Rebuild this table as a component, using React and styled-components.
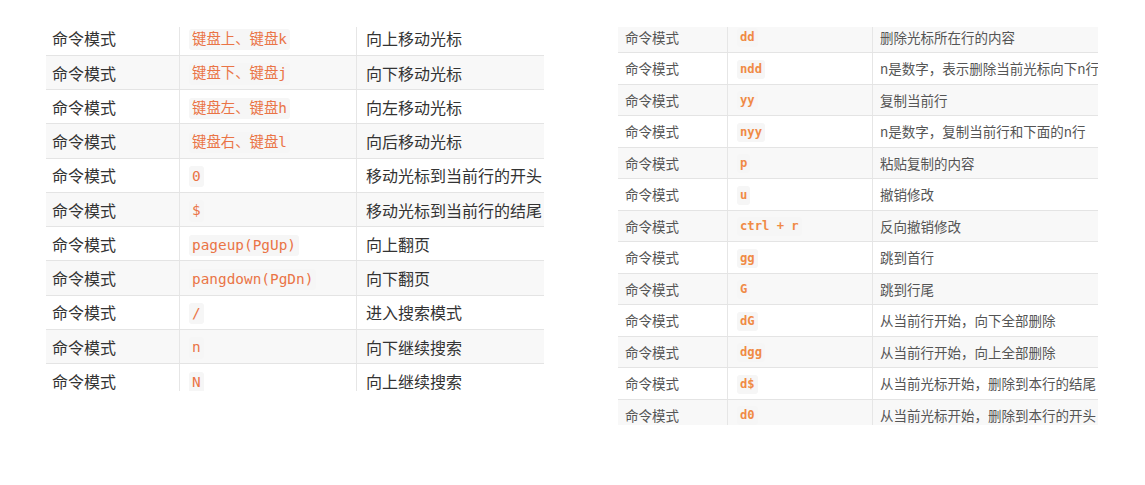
import React from 'react';
import styled, { createGlobalStyle } from 'styled-components';

const GlobalStyle = createGlobalStyle`
  html, body {
    margin: 0;
    padding: 0;
    background: #fff;
  }
  body {
    font-family: "Noto Sans", "Noto Sans CJK SC", sans-serif;
  }
`;

const Page = styled.div`
  display: flex;
  align-items: flex-start;
  gap: 74px;
  padding: 27px 0 0 46px;
  width: 1145px;
  height: 485px;
  box-sizing: border-box;
  overflow: hidden;
`;

const Panel = styled.div`
  width: ${(p) => p.$width}px;
  height: ${(p) => p.$height}px;
  overflow: hidden;
  flex-shrink: 0;
`;

const Table = styled.div`
  margin-top: ${(p) => p.$offset}px;
`;

const Row = styled.div`
  display: grid;
  grid-template-columns: ${(p) => p.$cols};
  height: ${(p) => p.$height}px;
  box-sizing: border-box;
  border-bottom: 1px solid #e4e4e4;
  background: ${(p) => (p.$shaded ? '#f8f8f8' : '#ffffff')};
`;

const Cell = styled.div`
  display: flex;
  align-items: center;
  padding-left: ${(p) => p.$pad}px;
  white-space: nowrap;
  overflow: hidden;
  border-left: ${(p) => (p.$divider ? '1px solid #e6e6e6' : 'none')};
  font-family: "Noto Sans CJK SC", "Noto Sans", sans-serif;
  font-size: ${(p) => p.$size}px;
  color: ${(p) => p.$color};
`;

const Code = styled.code`
  font-family: "DejaVu Sans Mono", "Noto Sans CJK SC", monospace;
  font-size: ${(p) => p.$size}px;
  font-weight: ${(p) => p.$weight};
  color: ${(p) => p.$color};
  background: #f6f6f6;
  border-radius: 3px;
  padding: 2px 3px;
  margin-top: ${(p) => p.$shift}px;
  line-height: 1.2;
`;

const leftRows = [
  ['键盘上、键盘k', '向上移动光标'],
  ['键盘下、键盘j', '向下移动光标'],
  ['键盘左、键盘h', '向左移动光标'],
  ['键盘右、键盘l', '向后移动光标'],
  ['0', '移动光标到当前行的开头'],
  ['$', '移动光标到当前行的结尾'],
  ['pageup(PgUp)', '向上翻页'],
  ['pangdown(PgDn)', '向下翻页'],
  ['/', '进入搜索模式'],
  ['n', '向下继续搜索'],
  ['N', '向上继续搜索'],
];

const rightRows = [
  ['dd', '删除光标所在行的内容'],
  ['ndd', 'n是数字，表示删除当前光标向下n行'],
  ['yy', '复制当前行'],
  ['nyy', 'n是数字，复制当前行和下面的n行'],
  ['p', '粘贴复制的内容'],
  ['u', '撤销修改'],
  ['ctrl + r', '反向撤销修改'],
  ['gg', '跳到首行'],
  ['G', '跳到行尾'],
  ['dG', '从当前行开始，向下全部删除'],
  ['dgg', '从当前行开始，向上全部删除'],
  ['d$', '从当前光标开始，删除到本行的结尾'],
  ['d0', '从当前光标开始，删除到本行的开头'],
];

const CommandTable = ({ rows, cols, rowHeight, offset, shadeFirst, text, code, pads }) => (
  <Table $offset={offset}>
    {rows.map(([key, desc], i) => (
      <Row key={i} $cols={cols} $height={rowHeight} $shaded={shadeFirst ? i % 2 === 0 : i % 2 === 1}>
        <Cell $pad={pads[0]} $size={text.size} $color={text.color}>
          命令模式
        </Cell>
        <Cell $pad={pads[1]} $divider $size={text.size} $color={text.color}>
          <Code $size={code.size} $weight={code.weight} $color={code.color} $shift={code.shift}>
            {key}
          </Code>
        </Cell>
        <Cell $pad={pads[2]} $divider $size={text.size} $color={text.color}>
          {desc}
        </Cell>
      </Row>
    ))}
  </Table>
);

const App = () => (
  <>
    <GlobalStyle />
    <Page>
      <Panel $width={498} $height={364}>
        <CommandTable
          rows={leftRows}
          cols="133px 177px 188px"
          rowHeight={34.25}
          offset={-5.3}
          shadeFirst={false}
          pads={[6, 9, 9]}
          text={{ size: 16, color: '#333333' }}
          code={{ size: 14.4, weight: 400, color: '#ea7446', shift: 3 }}
        />
      </Panel>
      <Panel $width={480} $height={398}>
        <CommandTable
          rows={rightRows}
          cols="109px 145px 260px"
          rowHeight={31.5}
          offset={-5.5}
          shadeFirst
          pads={[7, 9, 7]}
          text={{ size: 13.5, color: '#555555' }}
          code={{ size: 12.2, weight: 700, color: '#f08a45', shift: 2 }}
        />
      </Panel>
    </Page>
  </>
);

export default App;
